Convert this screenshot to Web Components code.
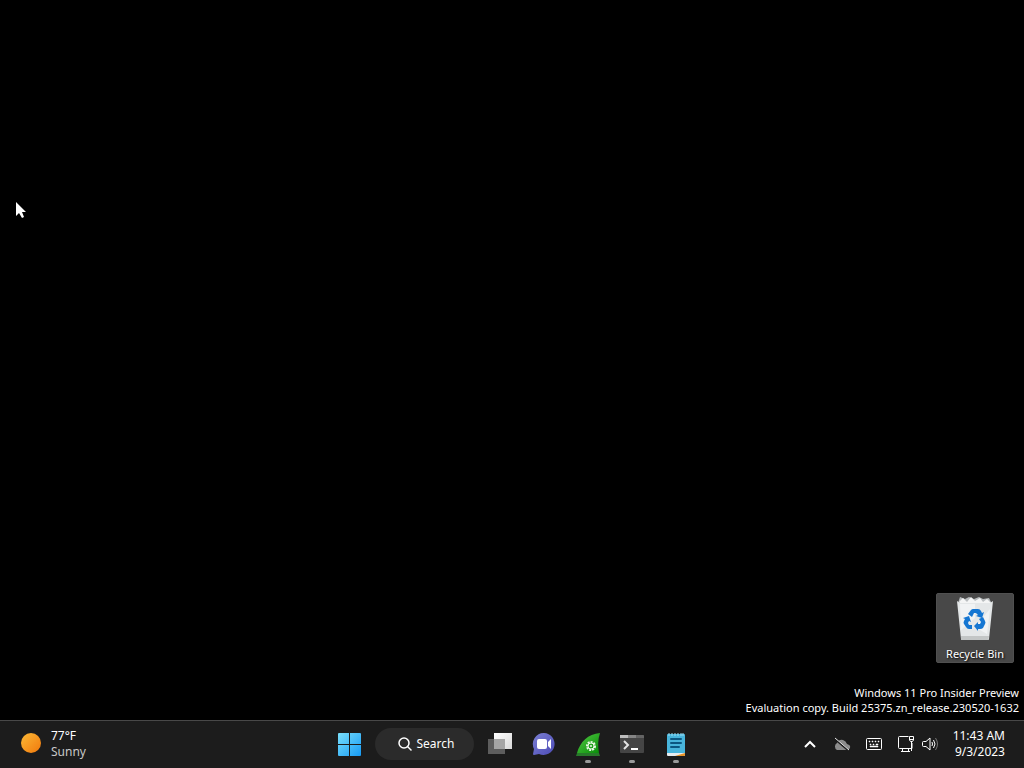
<!DOCTYPE html>
<html lang="en">
<head>
<meta charset="utf-8">
<title>Desktop</title>
<style>
  html, body {
    height: 100%;
    margin: 0;
  }
  body {
    background: #000;
    color: #fff;
    font: 12px/16px "Noto Sans", "Open Sans", sans-serif;
    overflow: hidden;
  }
</style>
</head>
<body>
<win-desktop>
  <desktop-icon label="Recycle Bin">
    <svg width="38" height="46" viewBox="0 0 38 46">
      <path d="M2 7 4 1l5 2 4-2 5 2 5-2 4 2 6-1 3 6-4 3H6z" fill="#b9bdbf"/>
      <path d="M3 6l4-4 4 4 4-5 4 4 5-3 3 4 4-3 4 4-5 3H8z" fill="#f4f5f5"/>
      <path d="M1 5 5 43q0 1 1 1h26q1 0 1-1l4-38-3 2H4z" fill="#e4e7e8"/>
      <path d="M4 8h15v14L5 34zM19 31l15-18-3 25z" fill="#f1f3f4"/>
      <path d="M5 40h28l-.5 3q0 1-1 1H6q-1 0-1-1z" fill="#c3c6c6"/>
      <g fill="#1576d2">
        <path d="M12 18l3-4q1-1 2-1h5q2 0 3 2l1 2 2-1-2 6-6-2 2-1-2-2h-2l-2 4z"/>
        <path d="M27 21l2 4q1 2 0 3l-2 4q-1 1-3 1h-2v2l-4-5 4-4v2h2l1-2-2-3z"/>
        <path d="M16 33h-3q-2 0-3-2l-2-3q-1-1 0-3l1-2-2-1 6-2 2 6-2-1-1 2 1 2h3z"/>
      </g>
    </svg>
  </desktop-icon>
  <div slot="watermark">Windows 11 Pro Insider Preview<br>Evaluation copy. Build 25375.zn_release.230520-1632</div>
  <mouse-pointer slot="pointer"></mouse-pointer>
</win-desktop>

<task-bar>
  <weather-widget slot="left" temp="77°F" sky="Sunny"></weather-widget>

  <task-button label="Start">
    <svg width="24" height="24" viewBox="0 0 24 24">
      <defs>
        <linearGradient id="win" gradientUnits="userSpaceOnUse" x1="0" y1="0" x2="24" y2="24">
          <stop offset="0" stop-color="#7be0fb"/>
          <stop offset="1" stop-color="#1499f5"/>
        </linearGradient>
      </defs>
      <path fill="url(#win)" d="M2 0h10v11H1V1q0-1 1-1zM13 0h10q1 0 1 1v10H13zM1 12h11v11H2q-1 0-1-1zM13 12h11v10q0 1-1 1H13z"/>
    </svg>
  </task-button>
  <search-pill></search-pill>
  <div slot="apps">
    <task-button label="Task View">
      <svg width="24" height="24" viewBox="0 0 24 24">
        <defs>
          <linearGradient id="tv" x2="1" y2="1">
            <stop offset="0" stop-color="#fff"/>
            <stop offset="1" stop-color="#d8d8d8"/>
          </linearGradient>
        </defs>
        <path d="M6 0h18v16H6z" fill="url(#tv)"/>
        <path d="M0 6h17v15H0z" fill="#5d5d5d"/>
        <path d="M6 6h11v10H6z" fill="#a5a5a5"/>
      </svg>
    </task-button>
    <task-button label="Chat">
      <svg width="24" height="24" viewBox="0 0 24 24">
        <defs>
          <linearGradient id="chat" x2="1" y2="1">
            <stop offset="0" stop-color="#7b7fd2"/>
            <stop offset="1" stop-color="#4c4bb6"/>
          </linearGradient>
        </defs>
        <path d="M12 0a11 11 0 1 1-5 21l-5 1q-1 0-1-1l1-5A11 11 0 0 1 12 0z" fill="url(#chat)"/>
        <rect x="5" y="6" width="10" height="10" rx="2" fill="#fff"/>
        <path d="M16 9l3-3v10l-3-3z" fill="#fff"/>
      </svg>
    </task-button>
    <task-button label="Wireshark" running>
      <svg width="24" height="24" viewBox="0 0 24 24">
        <defs>
          <linearGradient id="fin" x2="1" y2="1">
            <stop offset="0" stop-color="#55c945"/>
            <stop offset="1" stop-color="#078d08"/>
          </linearGradient>
        </defs>
        <path d="M1 20C4 9 12 1 24 0q-3 9-1 20z" fill="url(#fin)"/>
        <path d="M1 20h22l1 3H0z" fill="#27792a"/>
        <circle cx="15" cy="13" r="4" fill="none" stroke="#e9f8e4" stroke-width="2" stroke-dasharray="2 1"/>
        <circle cx="15" cy="13" r="3" fill="none" stroke="#e9f8e4"/>
        <circle cx="15" cy="13" r="1" fill="#e9f8e4"/>
      </svg>
    </task-button>
    <task-button label="Terminal" running>
      <svg width="24" height="24" viewBox="0 0 24 24">
        <rect y="2" width="24" height="18" rx="1" fill="#454545"/>
        <path d="M0 2h8v3H0z" fill="#bdbdbd"/>
        <path d="M8 2h8v3H8z" fill="#858585"/>
        <path d="M16 2h7q1 0 1 1v2h-8z" fill="#646464"/>
        <path d="M4 8l4 4-4 4" fill="none" stroke="#e4e4e4" stroke-width="2"/>
        <path d="M11 15h7v2h-7z" fill="#fff"/>
      </svg>
    </task-button>
    <task-button label="Notepad" running>
      <svg width="24" height="24" viewBox="0 0 24 24">
        <rect x="3" y="1" width="18" height="21" rx="1" fill="#48b5dc"/>
        <path d="M3 20h18v2q0 1-1 1H4q-1 0-1-1z" fill="#e8edf0"/>
        <path d="M11 23l10-3v2q0 1-1 1z" fill="#e69228"/>
        <path d="M5 0v3M8 0v3M11 0v3M14 0v3M17 0v3M19 0v3" stroke="#9adcf2"/>
        <path d="M7 6h10M7 10h10M7 14h8" stroke="#0c5781" stroke-width="2" stroke-linecap="round"/>
      </svg>
    </task-button>
  </div>

  <system-tray slot="right">
    <tray-button label="Show hidden icons">
      <svg width="12" height="16" viewBox="0 0 12 16"><path d="M1 11l5-5 5 5" fill="none" stroke="#fff" stroke-width="2"/></svg>
    </tray-button>
    <tray-button label="OneDrive">
      <svg width="18" height="16" viewBox="0 0 18 16">
        <path d="M4 14a4 4 0 0 1 0-7q2-4 6-3 3 1 4 4 4 1 3 4-1 2-3 2H5z" fill="#8c8c8c"/>
        <path d="M2 3l14 12" stroke="#1c1c1c" stroke-width="2"/>
        <path d="M2 2l14 12" stroke="#e8e8e8"/>
      </svg>
    </tray-button>
    <tray-button label="Touch keyboard">
      <svg width="16" height="16" viewBox="0 0 16 16">
        <rect x=".5" y="2.500" width="15" height="11" rx="1" fill="none" stroke="#fff"/>
        <path d="M3 5h1v1H3zM6 5h1v1H6zM9 5h1v1H9zM12 5h1v1h-1zM4 8h1v1H4zM7 8h1v1H7zM10 8h2v1h-2zM4 10h8v1H4z" fill="#fff" stroke="#fff" stroke-width=".5"/>
      </svg>
    </tray-button>
    <tray-button slot="status" label="Network">
      <svg width="18" height="18" viewBox="0 0 18 18" fill="none" stroke="#fff">
        <path d="M11.500 1.500h-9q-1 0-1 1v10q0 1 1 1h12.500V8M5.500 13.500v3M11.500 13.500v3M4 16.500h9"/>
        <path d="M12.500 1.500h4v3.500l-1 1.500h-2l-1-1.500zM12.500 4.500h4M14.500 6v10"/>
      </svg>
    </tray-button>
    <tray-button slot="status" label="Volume">
      <svg width="18" height="18" viewBox="0 0 18 18" fill="none" stroke="#fff">
        <path d="M2.500 6.500H5l4-3.500v12l-4-3.500H2.500q-1 0-1-1v-3q0-1 1-1z"/>
        <path d="M11 7q1 2 0 4M12.500 5q3 4 0 8"/>
        <path d="M14.500 3q4 6 0 12" stroke="#777"/>
      </svg>
    </tray-button>
    <tray-clock slot="clock" time="11:43 AM" date="9/3/2023"></tray-clock>
  </system-tray>
</task-bar>

<script>
const makeTemplate = (html) => {
  const temp = document.createElement("template");
  temp.innerHTML = html;
  return temp;
};

class BaseElement extends HTMLElement {
  constructor() {
    super();
    this.attachShadow({ mode: "open" });
    this.shadowRoot.appendChild(this.constructor.template.content.cloneNode(true));
  }
  setText(selector, attr) {
    this.shadowRoot.querySelector(selector).textContent = this.getAttribute(attr);
  }
}

class WinDesktop extends BaseElement {
  static template = makeTemplate(`
    <style>
      :host {
        display: flex;
        flex-direction: column;
        justify-content: flex-end;
        align-items: flex-end;
        height: calc(100vh - 48px);
        box-sizing: border-box;
        padding-bottom: 5px;
        font-size: 11px;
      }
      main {
        padding: 0 10px 22px;
      }
      aside {
        padding-right: 5px;
        text-align: right;
        line-height: 15px;
      }
    </style>
    <main><slot></slot></main>
    <aside><slot name="watermark"></slot></aside>
    <slot name="pointer"></slot>
  `);
}

class DesktopIcon extends BaseElement {
  static template = makeTemplate(`
    <style>
      :host { display: block; }
      button {
        display: flex;
        flex-direction: column;
        align-items: center;
        gap: 4px;
        width: 78px;
        height: 70px;
        padding: 2px 0 0;
        border: 1px solid #505050;
        border-radius: 2px;
        box-sizing: border-box;
        background: #484848;
        color: #fff;
        font: inherit;
        text-shadow: 1px 1px 2px #000;
      }
    </style>
    <button type="button"><slot></slot><span></span></button>
  `);
  connectedCallback() {
    this.setText("span", "label");
  }
}

class MousePointer extends BaseElement {
  static template = makeTemplate(`
    <style>
      :host {
        position: absolute;
        left: 15px;
        top: 201px;
        pointer-events: none;
      }
      svg { display: block; }
    </style>
    <svg width="12" height="18" viewBox="0 0 12 18">
      <path d="M1 1v14l3-3 3 5 2-1-2-5h4z" fill="#fff"/>
    </svg>
  `);
}

class TaskBar extends BaseElement {
  static template = makeTemplate(`
    <style>
      :host {
        display: grid;
        grid-template-columns: 1fr auto 1fr;
        align-items: center;
        height: 48px;
        box-sizing: border-box;
        padding-bottom: 1px;
        border-top: 1px solid #484848;
        background: #1c1c1c;
      }
      nav {
        display: flex;
        align-items: center;
        gap: 4px;
      }
      .right { justify-self: end; }
      ::slotted([slot="apps"]) { display: flex; }
    </style>
    <div><slot name="left"></slot></div>
    <nav aria-label="Taskbar"><slot></slot><slot name="apps"></slot></nav>
    <div class="right"><slot name="right"></slot></div>
  `);
}

class WeatherWidget extends BaseElement {
  static template = makeTemplate(`
    <style>
      :host { display: block; }
      button {
        display: flex;
        align-items: center;
        gap: 9px;
        padding: 0 0 0 20px;
        border: 0;
        background: none;
        color: #fff;
        font: inherit;
        text-align: left;
      }
      div { display: flex; flex-direction: column; }
      .sky { color: #c8c8c8; }
    </style>
    <button type="button">
      <svg width="22" height="22" viewBox="0 0 22 22">
        <defs>
          <linearGradient id="sun" x2="1" y2="1">
            <stop offset="0" stop-color="#fbb936"/>
            <stop offset="1" stop-color="#f1780c"/>
          </linearGradient>
        </defs>
        <circle cx="11" cy="10" r="10" fill="url(#sun)"/>
      </svg>
      <div><span class="temp"></span><span class="sky"></span></div>
    </button>
  `);
  connectedCallback() {
    this.setText(".temp", "temp");
    this.setText(".sky", "sky");
  }
}

class TaskButton extends BaseElement {
  static template = makeTemplate(`
    <style>
      :host { display: block; }
      button {
        display: grid;
        grid-template-rows: 1fr 3px;
        place-items: center;
        width: 44px;
        height: 46px;
        padding: 12px 0 4px;
        border: 0;
        background: none;
      }
      ::slotted(svg) { display: block; align-self: start; }
      i {
        width: 6px;
        height: 3px;
        border-radius: 2px;
      }
      :host([running]) i { background: #9a9a9a; }
    </style>
    <button type="button"><slot></slot><i></i></button>
  `);
  connectedCallback() {
    this.shadowRoot.querySelector("button").setAttribute("aria-label", this.getAttribute("label"));
  }
}

class SearchPill extends BaseElement {
  static template = makeTemplate(`
    <style>
      :host { display: block; }
      button {
        display: flex;
        align-items: center;
        gap: 4px;
        height: 32px;
        width: 99px;
        padding: 0 0 0 22px;
        border: 0;
        border-radius: 16px;
        background: #2b2b2b;
        color: #fff;
        font: inherit;
      }
    </style>
    <button type="button">
      <svg width="16" height="16" viewBox="0 0 16 16" fill="none" stroke="#fff" stroke-width="1.500">
        <circle cx="7" cy="7" r="5"/>
        <path d="M10.500 10.500l4 4"/>
      </svg>
      <span>Search</span>
    </button>
  `);
}

class TrayButton extends BaseElement {
  static template = makeTemplate(`
    <style>
      :host { display: block; }
      button {
        display: grid;
        place-items: center;
        width: 32px;
        height: 40px;
        padding: 0;
        border: 0;
        background: none;
      }
      :host([slot="status"]) button { width: 24px; }
    </style>
    <button type="button"><slot></slot></button>
  `);
  connectedCallback() {
    this.shadowRoot.querySelector("button").setAttribute("aria-label", this.getAttribute("label"));
  }
}

class TrayClock extends BaseElement {
  static template = makeTemplate(`
    <style>
      :host { display: block; }
      button {
        display: flex;
        flex-direction: column;
        align-items: flex-end;
        padding: 0;
        border: 0;
        background: none;
        color: #fff;
        font: inherit;
      }
    </style>
    <button type="button"><span class="time"></span><span class="date"></span></button>
  `);
  connectedCallback() {
    this.setText(".time", "time");
    this.setText(".date", "date");
  }
}

class SystemTray extends BaseElement {
  static template = makeTemplate(`
    <style>
      :host {
        display: flex;
        align-items: center;
        padding-right: 19px;
      }
      div { display: flex; }
      .status { padding: 0 11px 0 4px; }
    </style>
    <div><slot></slot></div>
    <div class="status"><slot name="status"></slot></div>
    <slot name="clock"></slot>
  `);
}

customElements.define("win-desktop", WinDesktop);
customElements.define("desktop-icon", DesktopIcon);
customElements.define("mouse-pointer", MousePointer);
customElements.define("task-bar", TaskBar);
customElements.define("weather-widget", WeatherWidget);
customElements.define("task-button", TaskButton);
customElements.define("search-pill", SearchPill);
customElements.define("tray-button", TrayButton);
customElements.define("tray-clock", TrayClock);
customElements.define("system-tray", SystemTray);
</script>
</body>
</html>
